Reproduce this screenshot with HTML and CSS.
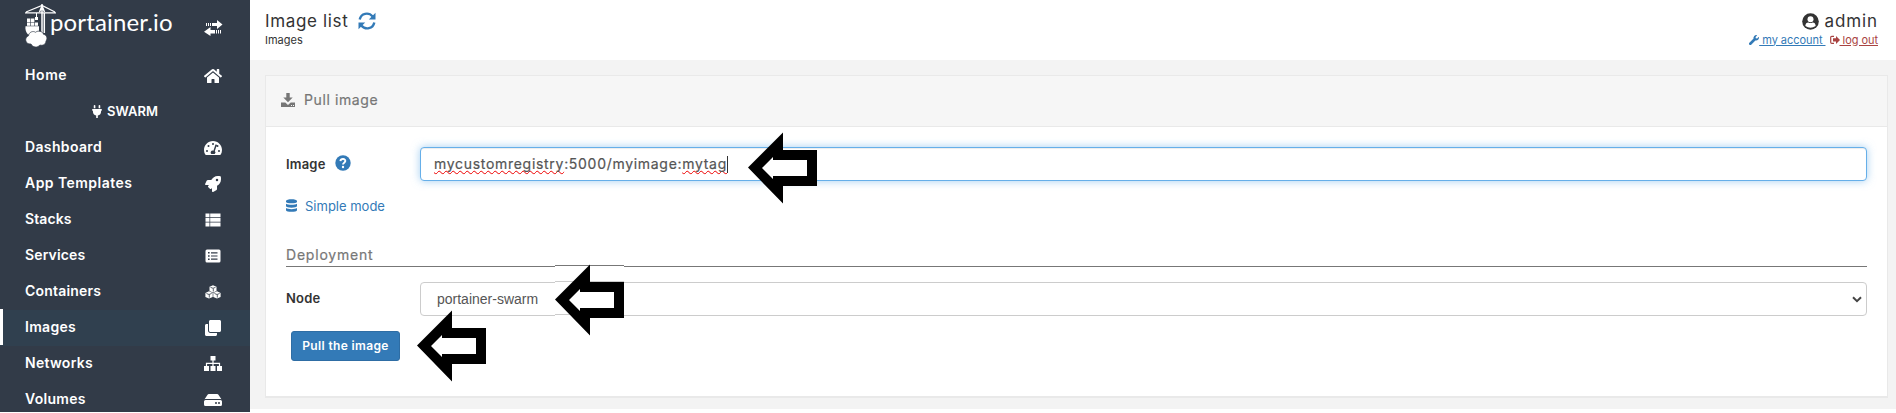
FILE: index.html
```html
<!DOCTYPE html>
<html lang="en">
<head>
<meta charset="utf-8">
<title>Portainer</title>
<link rel="stylesheet" href="styles.css">
</head>
<body>
<div class="page">
  <nav class="sidebar">
    <div class="brand">
      <svg class="crane" width="32" height="44" viewBox="0 0 32 44" fill="none" stroke="#fff">
        <path d="M0 8.800h31M1 8 17 1.500 30 8" stroke-width="1.200"/>
        <path d="M17 0v29M19.300 9v20M14.500 8l2.500-6 2.500 6" stroke-width="1.500"/>
        <path d="M11.500 9v5" stroke-width="1"/>
        <path fill="#fff" stroke="none" d="M10 13h3v3h-3zM2 14.500h3.400v3.400H2zM6 14.500h3.400v3.400H6zM10 18.500h3v3.200h-3zM2 18.500h3.400v3.200H2zM6 18.500h3.400v3.200H6zM.500 22.300H14v6L9 30.500H3c-2-2-3-5-2.500-8.200z"/>
        <path fill="#fff" stroke="#323b48" stroke-width=".7" d="M6 40c-6 .6-7-6.500-2.500-8.200C4 28 8 26.500 10.500 28.300c2.800-2.300 7.200-1 8 2 3.200.6 4.500 4.200 2.500 6.700 0 3.400-3.500 5-6 4-2.700 3-7.200 2.600-9-1z"/>
      </svg>
      <span class="brand-name">portainer.io</span>
      <svg class="toggle" width="20" height="16" viewBox="0 0 20 16" fill="#fff"><path d="M2 3h1v3H2zM4 3h1v3H4zM6 3h1v3H6zM8 3h5V0l5.500 4.500L13 9V6H8zM6.500 7v3H11v3.500H6.500V16L0 11.800zM12 10h1v3.500h-1zM14 10h1v3.500h-1zM16 10h1v3.500h-1z"/></svg>
    </div>
    <a class="item"><span class="w-home">Home</span>
      <svg width="18" height="16" viewBox="0 0 576 512"><path d="M280.370 148.260 96 300.110V464a16 16 0 0 0 16 16h112a16 16 0 0 0 16-16v-96a16 16 0 0 1 16-16h64a16 16 0 0 1 16 16v95.640a16 16 0 0 0 16 16.050L464 480a16 16 0 0 0 16-16V300L295.670 148.260a12.190 12.190 0 0 0-15.300 0zM571.600 251.470 488 182.560V44.050a12 12 0 0 0-12-12h-56a12 12 0 0 0-12 12v72.610L318.470 43a48 48 0 0 0-61 0L4.340 251.470a12 12 0 0 0-1.600 16.900l25.500 31A12 12 0 0 0 45.150 301l235.220-193.740a12.190 12.190 0 0 1 15.300 0L530.900 301a12 12 0 0 0 16.900-1.600l25.500-31a12 12 0 0 0-1.700-16.930z"/></svg></a>
    <div class="endpoint">
      <svg width="10" height="13" viewBox="0 0 384 512"><path d="M320 32a32 32 0 0 0-64 0v96h64zm48 128H16A16 16 0 0 0 0 176v32a16 16 0 0 0 16 16h16v32a160.070 160.070 0 0 0 128 156.800V512h64v-99.200A160.070 160.070 0 0 0 352 256v-32h16a16 16 0 0 0 16-16v-32a16 16 0 0 0-16-16zM128 32a32 32 0 0 0-64 0v96h64z"/></svg>
      <span>SWARM</span></div>
    <a class="item"><span class="w-dashboard">Dashboard</span>
      <svg width="18" height="16" viewBox="0 0 576 512"><path fill-rule="evenodd" d="M288 32C129 32 0 161 0 320c0 53 14 102 39 145 6 10 16 15 28 15h442c12 0 22-5 28-15 25-43 39-92 39-145C576 161 447 32 288 32zM96 384a32 32 0 1 1 0-64 32 32 0 0 1 0 64zm48-160a32 32 0 1 1 0-64 32 32 0 0 1 0 64zm144-128a32 32 0 1 1 0 64 32 32 0 0 1 0-64zm105 44c13 4 20 18 15 31l-61 184a63 63 0 0 1-6 93H235a64 64 0 0 1 66-108l61-184c4-13 18-20 31-16zm39 84a32 32 0 1 1 0-64 32 32 0 0 1 0 64zm48 160a32 32 0 1 1 0-64 32 32 0 0 1 0 64z"/></svg></a>
    <a class="item"><span class="w-app">App Templates</span>
      <svg width="16" height="16" viewBox="0 0 512 512"><path fill-rule="evenodd" d="M505 19c-1-6-7-11-12-13-32-6-57-6-82-6-103 0-165 55-211 128H95c-16 0-35 12-43 26L3 253c-8 19 4 35 21 35h104l-22 22c-13 13-13 33 0 46l50 50c13 13 33 13 46 0l22-22v104c0 18 16 29 36 20l98-49c15-7 27-26 27-43V311c72-46 127-109 127-211 0-25 0-50-7-81zM384 168a40 40 0 1 1 0-80 40 40 0 0 1 0 80z"/></svg></a>
    <a class="item"><span class="w-stacks">Stacks</span>
      <svg width="16" height="16" viewBox="0 0 16 16"><path d="M.500 1.500h4v3.700h-4zM5.200 1.500h10.300v3.700H5.200zM.500 5.900h4v3.900h-4zM5.200 5.900h10.300v3.900H5.200zM.500 10.500h4v4h-4zM5.200 10.500h10.300v4H5.200z"/></svg></a>
    <a class="item"><span class="w-services">Services</span>
      <svg width="16" height="16" viewBox="0 0 16 16"><path fill-rule="evenodd" d="M2 1.500h12q1.500 0 1.500 1.500v10q0 1.500-1.500 1.500H2Q.500 14.500.500 13V3Q.500 1.500 2 1.500zM3 4v1.600h1.600V4zm3 .2v1.200h6.500V4.200zM3 7.200v1.600h1.600V7.200zm3 .2v1.200h6.500V7.400zM3 10.400V12h1.600v-1.600zm3 .2v1.200h6.500v-1.200z"/></svg></a>
    <a class="item"><span class="w-containers">Containers</span>
      <svg width="16" height="16" viewBox="0 0 16 16"><path d="M8 1.200 11.500 2.700V7L8 8.500 4.500 7V2.700zM4 7.300 7.700 9v4L4 14.600.400 13V9zM12 7.300 15.600 9v4L12 14.600 8.300 13V9z"/><path fill="none" stroke="#323b48" stroke-width=".8" d="m5.500 3.300 2.500 1 2.500-1M8.300 4.500v3M1.500 9.500l2.500 1 2.600-1M4.300 10.600v3M9.500 9.500l2.500 1 2.600-1M12.300 10.600v3"/></svg></a>
    <a class="item active"><span class="w-images">Images</span>
      <svg width="16" height="16" viewBox="0 0 512 512"><path d="M464 0c26.500 0 48 21.500 48 48v288c0 26.500-21.500 48-48 48H176c-26.500 0-48-21.500-48-48V48c0-26.500 21.500-48 48-48h288M176 416c-44.100 0-80-35.900-80-80V128H48c-26.500 0-48 21.500-48 48v288c0 26.500 21.500 48 48 48h288c26.500 0 48-21.500 48-48v-48H176z"/></svg></a>
    <a class="item"><span class="w-networks">Networks</span>
      <svg width="18" height="15" viewBox="0 0 18 15"><path d="M6.500 0h5v4.500h-5zM0 10h5v5H0zM6.500 10h5v5h-5zM13 10h5v5h-5z"/><path fill="none" stroke="#fff" stroke-width="1.200" d="M9 4v7M2.500 10V7.300h13V10"/></svg></a>
    <a class="item"><span class="w-volumes">Volumes</span>
      <svg width="18" height="16" viewBox="0 0 576 512"><path fill-rule="evenodd" d="M576 304v96a48 48 0 0 1-48 48H48a48 48 0 0 1-48-48v-96a48 48 0 0 1 48-48h480a48 48 0 0 1 48 48zm-48-80a79.600 79.600 0 0 1 30 5.800L462.300 85.400A48 48 0 0 0 422.300 64H153.700a48 48 0 0 0-40 21.400L18 229.800A79.600 79.600 0 0 1 48 224zm-48 96a32 32 0 1 0 0 64 32 32 0 0 0 0-64zm-96 0a32 32 0 1 0 0 64 32 32 0 0 0 0-64z"/></svg></a>
  </nav>
  <main class="content">
    <header class="topbar">
      <div>
        <div class="title"><span>Image list</span>
          <svg width="18" height="18" viewBox="0 0 18 18"><path fill="none" stroke="#337ab7" stroke-width="2.400" d="M1.700 7.500C3 1.200 10.500-.400 14.700 4.500M16.300 10.500C15 16.800 7.500 18.400 3.300 13.500"/><path fill="#337ab7" d="M17.500.800v6.700h-6.700zM.500 17.200v-6.700h6.700z"/></svg></div>
        <div class="crumb">Images</div>
      </div>
      <div class="user">
        <div class="user-name">
          <svg width="17" height="17" viewBox="0 0 17 17"><circle cx="8.500" cy="8.500" r="8.300" fill="#333"/><circle cx="8.500" cy="6.200" r="3" fill="#fff"/><path fill="#fff" d="M3.300 13c.2-2.300 1.300-3.400 3-3.400q2.200 1 4.400 0c1.700 0 2.800 1.100 3 3.400q-5.200 3.600-10.400 0z"/></svg>
          <span>admin</span></div>
        <div class="links">
          <a class="account"><svg width="10" height="10" viewBox="0 0 512 512"><path fill="#337ab7" d="M507.700 109c-2-8-12-11-18-5l-74 74-68-11-11-68 74-74c6-6 3-16-5-18A144 144 0 0 0 234 184L19 399a64 64 0 1 0 94 94l214-215A144 144 0 0 0 508 109z"/></svg><u>&nbsp;my account&nbsp;</u></a>
          <a class="logout"><svg width="10" height="10" viewBox="0 0 10 10"><path fill="none" stroke="#a94442" stroke-width="1.200" d="M4 1.400H1.800Q.700 1.400.700 2.500v4.800q0 1.100 1.100 1.100H4"/><path fill="#a94442" d="M3 3.300h3V.900L10 4.900 6 9V6.500H3z"/></svg><u>&nbsp;log out</u></a>
        </div>
      </div>
    </header>
    <section class="panel">
      <div class="panel-head">
        <svg width="14" height="14" viewBox="0 0 14 14" fill="#767676"><path d="M5.300 0h3.400v4.500h3L7 9.200 2.300 4.500h3z"/><path fill-rule="evenodd" d="M0 9.500h4.300L7 12l2.700-2.500H14V14H0zM10 12v1h1v-1zm2 0v1h1v-1z"/></svg>
        <span>Pull image</span></div>
      <div class="panel-body">
        <div class="row">
          <label class="w-label">Image</label>
          <svg class="help" width="16" height="16" viewBox="0 0 16 16"><circle cx="8" cy="8" r="7.700" fill="#337ab7"/><path fill="none" stroke="#fff" stroke-width="1.900" d="M5.400 6.100C5.800 3.200 10.700 3.500 10.300 6.200 10.100 7.700 8 7.700 8 9.600"/><circle cx="8" cy="12" r="1.200" fill="#fff"/></svg>
          <div class="field focused"><span class="typed"><span class="misspelt">mycustomregistry</span>:5000/myimage:<span class="misspelt">mytag</span></span><i class="caret"></i></div>
        </div>
        <a class="mode"><svg width="11" height="13" viewBox="0 0 11 13" fill="#337ab7"><path d="M0 2C0-.300 11-.300 11 2v1C11 4.800 0 4.800 0 3zM0 4.700c2 1.500 9 1.500 11 0v2.600c0 1.800-11 1.800-11 0zM0 9c2 1.500 9 1.500 11 0v2.200c0 2.200-11 2.200-11 0z"/></svg><span>Simple mode</span></a>
        <h2 class="section-title"><span>Deployment</span></h2>
        <div class="row node">
          <label class="w-node">Node</label>
          <div class="field select"><span>portainer-swarm</span>
            <svg width="10" height="7" viewBox="0 0 10 7" fill="none" stroke="#444" stroke-width="2"><path d="m1 1.200 4 3.900 4-3.900"/></svg></div>
        </div>
        <button class="pull"><span>Pull the image</span></button>
      </div>
    </section>
  </main>
  <svg class="arrow arrow-image" width="69" height="72" viewBox="0 0 69 72"><path d="M0 35.500 35 .500V18h34v36H35v17.500z"/><path fill="#fff" d="M14 36 25 25v3h34v16H25v3z"/></svg>
  <svg class="arrow arrow-node" width="69" height="72" viewBox="0 0 69 72"><path fill="#fff" d="M0 0h69v3H0zM0 16h69v4H0zM0 49h69v4H0z"/><path fill="#777" d="M0 1h69v1H0z"/><path fill="#ccc" d="M0 17h69v1H0zM0 50h69v1H0z"/><path d="M0 35.500 35 .500V18h34v36H35v17.500z"/><path fill="#fff" d="M14 36 25 25v3h34v16H25v3z"/></svg>
  <svg class="arrow arrow-pull" width="69" height="72" viewBox="0 0 69 72"><path d="M0 35.500 35 .500V18h34v36H35v17.500z"/><path fill="#fff" d="M14 36 25 25v3h34v16H25v3z"/></svg>
</div>
</body>
</html>
```
FILE: styles.css
```css
* { box-sizing: border-box; }
body { margin: 0; background: #fff; font-family: Inter, "Open Sans", sans-serif; font-size: 14px; color: #333; overflow: hidden; }
svg { display: block; flex: none; }
.page { position: relative; display: flex; width: 1896px; height: 413px; overflow: hidden; }
.sidebar { flex: none; width: 250px; height: 412px; overflow: hidden; background: #323b48; color: #fff; }
.brand { display: flex; height: 57px; padding: 4px 0 0 25px; }
.brand-name { width: 147px; margin-left: -7px; padding-top: 2px; font: 24px/32px Lato, sans-serif; letter-spacing: .15px; white-space: nowrap; }
.toggle { margin: 16px 0 0 7px; }
.item { display: flex; align-items: center; justify-content: space-between; height: 36px; padding: 0 28px 0 25px; font-weight: 600; white-space: nowrap; }
.item svg { fill: #fff; margin-top: 1px; }
.item span { padding-bottom: 1px; }
.item svg[width="16"] { margin-right: 1px; }
.w-home { letter-spacing: .6px; }
.w-dashboard { letter-spacing: .35px; }
.w-app { letter-spacing: .45px; }
.w-stacks { letter-spacing: .1px; }
.w-services { letter-spacing: .15px; }
.w-containers { letter-spacing: .2px; }
.w-images, .w-networks, .w-volumes { letter-spacing: .3px; }
/* The highlight covers one row, a pixel below the row's own box. */
.active { background: linear-gradient(#323b48 1px, #30404f 1px); box-shadow: 0 1px #30404f, inset 3px 0 #fff; }
.endpoint { display: flex; align-items: center; justify-content: center; gap: 5px; height: 36px; font-size: 13px; font-weight: 600; }
.endpoint svg { fill: #fff; }
.content { flex: 1; height: 409px; background: #f3f3f3; padding-bottom: 11px; }
.topbar { display: flex; justify-content: space-between; height: 60px; padding: 11px 18px 0 15px; background: #fff; }
.title { display: flex; align-items: center; gap: 10px; height: 20px; font-size: 17px; letter-spacing: .65px; }
.crumb { height: 18px; line-height: 19px; font-size: 11px; }
.user-name { display: flex; align-items: center; justify-content: flex-end; gap: 5px; height: 20px; font-size: 17px; letter-spacing: .9px; }
.links { display: flex; gap: 4px; height: 18px; line-height: 19px; font-size: 11px; letter-spacing: -.05px; }
.links a { display: flex; align-items: center; }
.account { color: #337ab7; }
.logout { color: #a94442; }
.panel { height: 323px; margin: 15px 8px 0 15px; background: #fff; border: 1px solid #e9e9e9; border-bottom-width: 2px; }
.panel-head { display: flex; align-items: center; gap: 9px; height: 51px; padding: 0 15px 3px; background: #f6f6f6; border-bottom: 1px solid #e9e9e9; color: #767676; letter-spacing: .6px; -webkit-text-stroke: .2px; }
.panel-body { padding: 20px 20px 0; }
.row { position: relative; display: flex; align-items: center; height: 34px; }
.row label { font-size: 13px; font-weight: 600; letter-spacing: .2px; }
.help { margin: -2px 0 0 9px; }
.field { width: 1447px; height: 34px; margin-left: auto; display: flex; align-items: center; border: 1px solid #ccc; border-radius: 4px; padding: 0 13px; color: #555; background: #fff; }
.focused { border-color: #66afe9; box-shadow: inset 0 1px 1px rgba(0,0,0,.075), 0 0 8px rgba(102,175,233,.6); }
.typed { padding-bottom: 2px; letter-spacing: .7px; -webkit-text-stroke: .2px; }
.misspelt { text-decoration: underline wavy #e00 1px; text-decoration-skip-ink: none; text-underline-offset: 1px; }
.caret { width: 1px; height: 17px; background: #333; }
.mode { display: flex; align-items: center; gap: 8px; height: 20px; margin-top: 15px; padding-bottom: 1px; color: #337ab7; font-size: 13px; }
.section-title { height: 21px; margin: 30px 0 15px; border-bottom: 1px solid #777; font-size: 14px; line-height: 18px; font-weight: 400; color: #777; letter-spacing: .8px; -webkit-text-stroke: .2px; }
.node label { padding-bottom: 2px; }
.select { justify-content: space-between; padding: 0 4px 0 16px; font-family: "Liberation Sans", Arial, sans-serif; }
.pull { display: block; width: 109px; height: 30px; margin: 15px 0 0 5px; padding: 0; background: #337ab7; color: #fff; border: 1px solid #2e6da4; border-radius: 3px; font: 600 12px/26px Inter, sans-serif; letter-spacing: .35px; }
.arrow { position: absolute; }
.arrow-image { left: 748px; top: 132px; }
.arrow-node { left: 555px; top: 264px; }
.arrow-pull { left: 417px; top: 310px; }
```
